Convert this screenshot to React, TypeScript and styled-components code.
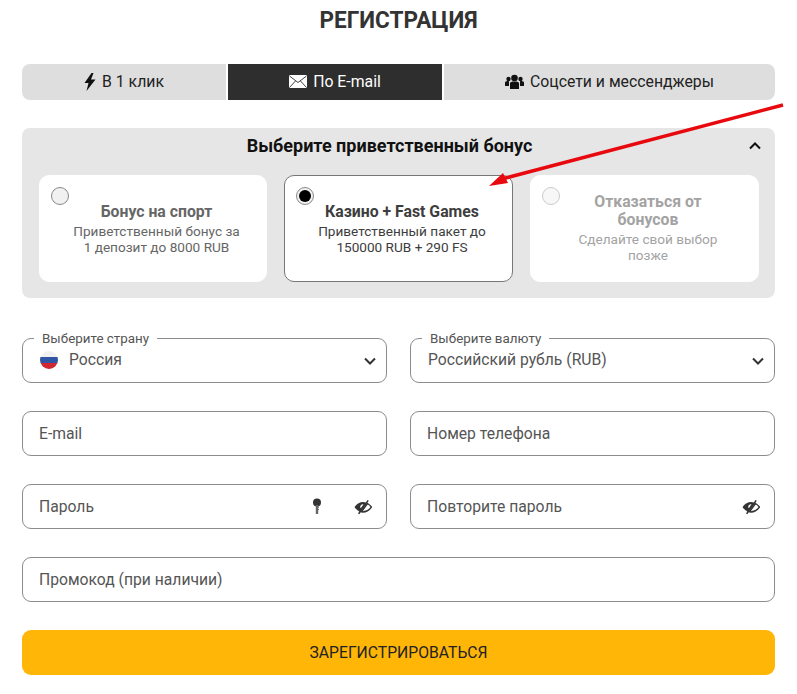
import React from "react";
import styled, { createGlobalStyle } from "styled-components";

const Global = createGlobalStyle`
  html, body { margin: 0; padding: 0; background: #fff; }
  body { font-family: Roboto, "Liberation Sans", sans-serif; }
  * { box-sizing: border-box; }
`;
const Page = styled.div`
  position: relative;
  width: 797px;
  height: 694px;
  padding: 0 22px;
  overflow: hidden;
`;
const Title = styled.h1`
  margin: 0;
  height: 64px;
  padding-top: 6px;
  font-size: 24px;
  line-height: 28px;
  font-weight: 700;
  text-align: center;
  color: #333;
  transform: scaleX(0.94);
`;
const Tabs = styled.div`
  display: grid;
  grid-template-columns: 204px 214px 331px;
  gap: 2px;
  height: 36px;
  border-radius: 8px;
  overflow: hidden;
`;
const Tab = styled.div<{ $active?: boolean }>`
  display: flex;
  align-items: center;
  justify-content: center;
  gap: 6px;
  padding-bottom: 1px;
  font-size: 15.8px;
  background: ${(p) => (p.$active ? "#2e2e2e" : "#dedede")};
  color: ${(p) => (p.$active ? "#fff" : "#222")};
`;
const Panel = styled.section`
  margin-top: 28px;
  height: 170px;
  padding: 0 16px 0 17px;
  background: #e6e6e6;
  border-radius: 8px;
`;
const PanelHead = styled.div`
  position: relative;
  height: 47px;
  padding: 8px 19px 0 0;
  text-align: center;
  font-size: 18px;
  line-height: 20px;
  font-weight: 700;
  color: #111;
  svg { position: absolute; right: -3px; top: 11px; }
`;
const Cards = styled.div`
  display: grid;
  grid-template-columns: 228px 229px 229px;
  gap: 17px;
`;
const Card = styled.div<{ $selected?: boolean; $off?: boolean }>`
  position: relative;
  height: 107px;
  padding: ${(p) => (p.$off ? "17px 31px 0 38px" : "27px 21px 0 28px")};
  background: #fff;
  border-radius: 10px;
  border: 1px solid ${(p) => (p.$selected ? "#777" : "#fff")};
  text-align: center;
  color: ${(p) => (p.$off ? "#a3a3a3" : p.$selected ? "#3d3d3d" : "#666")};
`;
const Radio = styled.span<{ $selected?: boolean; $off?: boolean }>`
  position: absolute;
  left: 11px;
  top: 11px;
  width: 18px;
  height: 18px;
  border-radius: 50%;
  border: 1px solid ${(p) => (p.$off ? "#ccc" : "#8a8a8a")};
  background: ${(p) => (p.$off ? "#f7f7f7" : "#f1f1f1")};
  display: flex;
  align-items: center;
  justify-content: center;
  &::after {
    content: "";
    display: ${(p) => (p.$selected ? "block" : "none")};
    width: 12px;
    height: 12px;
    border-radius: 50%;
    background: #000;
  }
`;
const CardTitle = styled.div`
  font-size: 15.8px;
  line-height: 18px;
  font-weight: 700;
`;
const CardText = styled.div`
  margin-top: 3px;
  font-size: 13.6px;
  line-height: 15.5px;
`;
const Form = styled.div`
  margin-top: 40px;
  display: grid;
  grid-template-columns: 365px 365px;
  column-gap: 23px;
  row-gap: 28px;
`;
const Field = styled.div<{ $wide?: boolean }>`
  position: relative;
  grid-column: ${(p) => (p.$wide ? "1 / -1" : "auto")};
  height: 45px;
  display: flex;
  align-items: center;
  padding: 0 16px;
  border: 1px solid #8c8c8c;
  border-radius: 9px;
  background: #fff;
  font-size: 15.7px;
  color: #555;
`;
const SelectField = styled(Field)`
  padding: 0 9px 2px 17px;
  svg { margin-top: 2px; }
`;
const Legend = styled.span`
  position: absolute;
  left: 11px;
  top: -8px;
  padding: 0 8px;
  background: #fff;
  font-size: 13.4px;
  line-height: 16px;
  color: #555;
`;
const Value = styled.span`
  flex: 1;
`;
const Flag = styled.span`
  width: 18px;
  height: 18px;
  border-radius: 50%;
  flex: none;
  margin-right: 11px;
  background: linear-gradient(#f1f1f1 0 33%, #2f55a4 33% 66%, #d22630 66%);
`;
const Icons = styled.span`
  display: flex;
  align-items: center;
  gap: 32px;
  margin-right: -2px;
`;
const Submit = styled.button`
  grid-column: 1 / -1;
  height: 45px;
  border: 0;
  border-radius: 9px;
  background: #ffb606;
  color: #222;
  font-family: inherit;
  font-size: 15.7px;
`;
const Arrow = styled.svg`
  position: absolute;
  left: 480px;
  top: 95px;
`;

const Chevron = () => (
  <svg width="14" height="14" viewBox="0 0 14 14" fill="none" stroke="#333" strokeWidth="2">
    <path d="M2 4.500l5 5 5-5" />
  </svg>
);
const Eye = () => (
  <svg width="18" height="16" viewBox="0 0 18 16">
    <path d="M0.500 8C3 4.500 6 3 9 3c1 0 2 .2 2.800.5L13.500 1l1.300.8-9.500 13.400-1.300-.8 1.300-1.900C3.500 11.500 1.800 10 .5 8z" fill="#333" />
    <path d="M13.500 4.500C15 5.400 16.400 6.600 17.500 8c-2.500 3.500-5.500 5-8.500 5-.5 0-1 0-1.500-.1z" fill="none" stroke="#333" strokeWidth="1.400" />
    <path d="M9.500 5.200L6.800 9.300C5.500 8 6.500 5 9.500 5.200z" fill="#fff" />
  </svg>
);
const KeyIcon = () => (
  <svg width="10" height="17" viewBox="0 0 10 17">
    <circle cx="5" cy="4.500" r="4" fill="#333" />
    <path d="M3.800 7h2.400v1.500H7v1.200h-.8v1.200H7v1.200h-.8v3.900H3.800z" fill="#666" />
  </svg>
);

export default function App() {
  return (
    <Page>
      <Global />
      <Title>РЕГИСТРАЦИЯ</Title>
      <Tabs>
        <Tab>
          <svg width="12" height="18" viewBox="0 0 12 18">
            <path d="M7.500 0L0.500 10h4L2.500 18 11.500 6.500H7L9.500 0z" fill="#111" />
          </svg>
          В 1 клик
        </Tab>
        <Tab $active>
          <svg width="18" height="13" viewBox="0 0 18 13">
            <rect width="18" height="13" rx="1" fill="#fff" />
            <path d="M0.500 1L9 7.500 17.500 1M0.500 12.500L6.500 6M17.500 12.500L11.500 6" fill="none" stroke="#2e2e2e" strokeWidth="0.900" />
          </svg>
          По E-mail
        </Tab>
        <Tab>
          <svg width="19" height="16" viewBox="0 0 19 16" fill="#111">
            <circle cx="9.500" cy="4" r="3.300" />
            <circle cx="3.500" cy="5" r="2.200" />
            <circle cx="15.500" cy="5" r="2.200" />
            <path d="M5 9.500c0-1.500 1.500-2 4.500-2s4.500.5 4.500 2V15H5z" />
            <path d="M0 8.500c0-1 1.500-1.500 3.500-1.500l.5.500V12H0zM19 8.500c0-1-1.500-1.500-3.500-1.500l-.5.500V12h4z" />
          </svg>
          Соцсети и мессенджеры
        </Tab>
      </Tabs>
      <Panel>
        <PanelHead>
          Выберите приветственный бонус
          <svg width="14" height="14" viewBox="0 0 14 14" fill="none" stroke="#111" strokeWidth="2">
            <path d="M2 9.500l5-5 5 5" />
          </svg>
        </PanelHead>
        <Cards>
          <Card>
            <Radio />
            <CardTitle>Бонус на спорт</CardTitle>
            <CardText>Приветственный бонус за 1 депозит до 8000 RUB</CardText>
          </Card>
          <Card $selected>
            <Radio $selected />
            <CardTitle>Казино + Fast Games</CardTitle>
            <CardText>Приветственный пакет до 150000 RUB + 290 FS</CardText>
          </Card>
          <Card $off>
            <Radio $off />
            <CardTitle>Отказаться от бонусов</CardTitle>
            <CardText>Сделайте свой выбор позже</CardText>
          </Card>
        </Cards>
      </Panel>
      <Form>
        <SelectField>
          <Legend>Выберите страну</Legend>
          <Flag />
          <Value>Россия</Value>
          <Chevron />
        </SelectField>
        <SelectField>
          <Legend>Выберите валюту</Legend>
          <Value>Российский рубль (RUB)</Value>
          <Chevron />
        </SelectField>
        <Field><Value>E-mail</Value></Field>
        <Field><Value>Номер телефона</Value></Field>
        <Field>
          <Value>Пароль</Value>
          <Icons><KeyIcon /><Eye /></Icons>
        </Field>
        <Field>
          <Value>Повторите пароль</Value>
          <Icons><Eye /></Icons>
        </Field>
        <Field $wide><Value>Промокод (при наличии)</Value></Field>
        <Submit>ЗАРЕГИСТРИРОВАТЬСЯ</Submit>
      </Form>
      <Arrow width="310" height="100" viewBox="0 0 310 100">
        <path d="M303 10L18 85" stroke="#e8090f" strokeWidth="3.500" />
        <path d="M9 91L23 78l5 10z" fill="#e8090f" />
      </Arrow>
    </Page>
  );
}
